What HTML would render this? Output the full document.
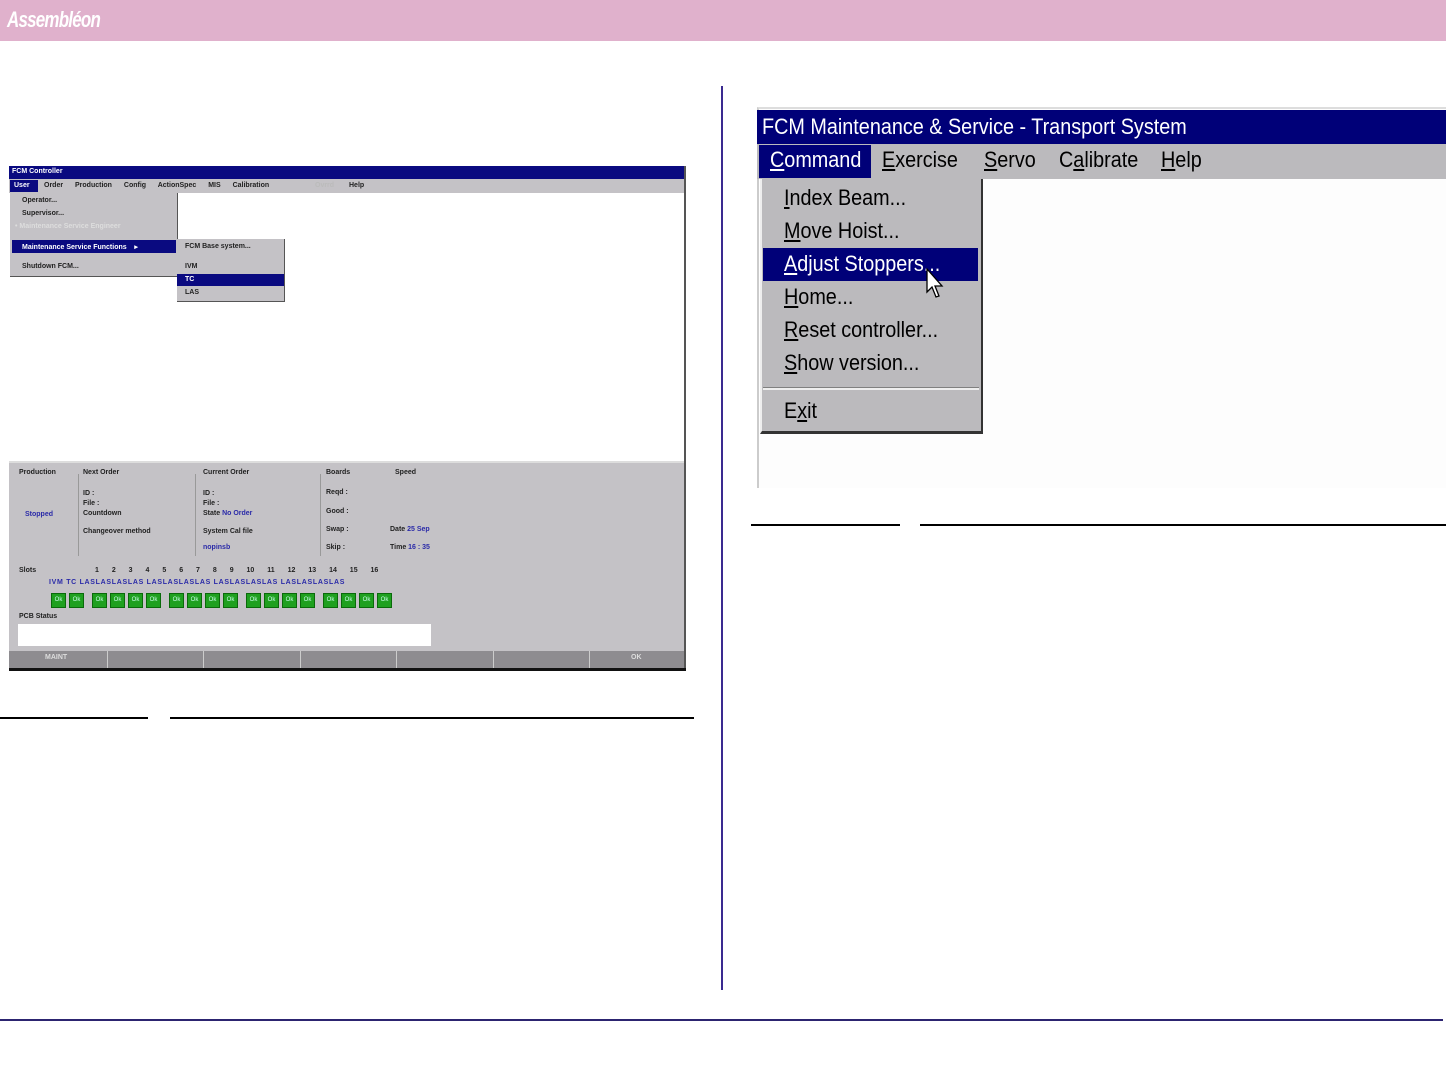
<!DOCTYPE html>
<html><head><meta charset="utf-8"><style>
*{margin:0;padding:0;box-sizing:border-box}
body{width:1446px;height:1077px;background:#fff;position:relative;overflow:hidden;font-family:"Liberation Sans",sans-serif}
.a{position:absolute}
.hdr{left:0;top:0;width:1446px;height:41px;background:#e0b1cc}
.logo{left:7px;top:7px;color:#fff;font:italic bold 22px "Liberation Sans",sans-serif;letter-spacing:-1px;transform:scaleX(.77);transform-origin:left}
.ln{background:#000;height:1.5px}
.s{font-size:7px;font-weight:bold;color:#222;white-space:nowrap}
.b{color:#2a2aa8}
.ok{width:15px;height:15px;background:#1fa01f;border:1px solid #0a6a0a;color:#cfe;font-size:6px;text-align:center;line-height:13px}
.big{font-family:"Liberation Sans",sans-serif;font-size:22px;white-space:nowrap;transform:scaleX(.9);transform-origin:left}
u{text-decoration:underline;text-underline-offset:2px}
</style></head><body>
<div class="a hdr"></div>
<div class="a logo">Assembléon</div>

<div class="a" style="left:9px;top:166px;width:677px;height:505px;background:#fff;border-right:2px solid #555"></div>
<div class="a" style="left:9px;top:166px;width:675px;height:13px;background:#0a0a80"></div>
<div class="a s" style="left:12px;top:168px;color:#fff;font-size:7px">FCM Controller</div>
<div class="a" style="left:9px;top:179px;width:675px;height:14px;background:#c4c2c6"></div>
<div class="a" style="left:10px;top:180px;width:28px;height:12px;background:#0a0a80"></div>
<div class="a s" style="left:14px;top:182px;color:#fff">User</div>
<div class="a s" style="left:44px;top:182px;word-spacing:10px">Order Production Config ActionSpec MIS Calibration</div>
<div class="a s" style="left:315px;top:182px;color:#bbb">Ovrrd</div>
<div class="a s" style="left:349px;top:182px">Help</div>
<div class="a" style="left:10px;top:193px;width:168px;height:84px;background:#c4c2c6;border-right:1px solid #555;border-bottom:1px solid #555"></div>
<div class="a s" style="left:22px;top:197px">Operator...</div>
<div class="a s" style="left:22px;top:210px">Supervisor...</div>
<div class="a s" style="left:15px;top:223px;color:#ddd">• Maintenance Service Engineer</div>
<div class="a" style="left:12px;top:240px;width:164px;height:13px;background:#0a0a80"></div>
<div class="a s" style="left:22px;top:243px;color:#fff">Maintenance Service Functions &nbsp;&nbsp;&nbsp;▸</div>
<div class="a s" style="left:22px;top:263px">Shutdown FCM...</div>
<div class="a" style="left:177px;top:239px;width:108px;height:63px;background:#c4c2c6;border-right:1px solid #555;border-bottom:1px solid #555"></div>
<div class="a s" style="left:185px;top:243px">FCM Base system...</div>
<div class="a s" style="left:185px;top:263px">IVM</div>
<div class="a" style="left:177px;top:274px;width:107px;height:12px;background:#0a0a80"></div>
<div class="a s" style="left:185px;top:276px;color:#fff">TC</div>
<div class="a s" style="left:185px;top:289px">LAS</div>
<div class="a" style="left:9px;top:461px;width:675px;height:191px;background:#c4c2c6;border-top:2px solid #ddd"></div>
<div class="a s" style="left:19px;top:469px">Production</div>
<div class="a s b" style="left:25px;top:511px">Stopped</div>
<div class="a s" style="left:83px;top:469px">Next Order</div>
<div class="a s" style="left:83px;top:489px;line-height:10px">ID :<br>File :<br>Countdown</div>
<div class="a s" style="left:83px;top:528px">Changeover method</div>
<div class="a s" style="left:203px;top:469px">Current Order</div>
<div class="a s" style="left:203px;top:489px;line-height:10px">ID :<br>File :<br>State <span class="b">No Order</span></div>
<div class="a s" style="left:203px;top:528px">System Cal file</div>
<div class="a s b" style="left:203px;top:544px">nopinsb</div>
<div class="a s" style="left:326px;top:469px">Boards</div>
<div class="a s" style="left:326px;top:489px">Reqd :</div>
<div class="a s" style="left:326px;top:508px">Good :</div>
<div class="a s" style="left:326px;top:526px">Swap :</div>
<div class="a s" style="left:326px;top:544px">Skip :</div>
<div class="a s" style="left:395px;top:469px">Speed</div>
<div class="a s" style="left:390px;top:526px">Date <span class="b">25 Sep</span></div>
<div class="a s" style="left:390px;top:544px">Time <span class="b">16 : 35</span></div>
<div class="a" style="left:78px;top:474px;width:1px;height:82px;background:#999"></div>
<div class="a" style="left:195px;top:474px;width:1px;height:82px;background:#999"></div>
<div class="a" style="left:320px;top:474px;width:1px;height:82px;background:#999"></div>
<div class="a s" style="left:19px;top:567px">Slots</div>
<div class="a s" style="left:95px;top:567px;word-spacing:11px">1 2 3 4 5 6 7 8 9 10 11 12 13 14 15 16</div>
<div class="a s b" style="left:49px;top:579px;font-size:7px;letter-spacing:.7px">IVM TC LASLASLASLAS LASLASLASLAS LASLASLASLAS LASLASLASLAS</div>
<div class="a" style="left:51px;top:593px;display:flex;gap:3px">
<div class="ok">Ok</div><div class="ok">Ok</div><div style="width:2px"></div>
<div class="ok">Ok</div><div class="ok">Ok</div><div class="ok">Ok</div><div class="ok">Ok</div><div style="width:2px"></div>
<div class="ok">Ok</div><div class="ok">Ok</div><div class="ok">Ok</div><div class="ok">Ok</div><div style="width:2px"></div>
<div class="ok">Ok</div><div class="ok">Ok</div><div class="ok">Ok</div><div class="ok">Ok</div><div style="width:2px"></div>
<div class="ok">Ok</div><div class="ok">Ok</div><div class="ok">Ok</div><div class="ok">Ok</div></div>
<div class="a s" style="left:19px;top:613px">PCB Status</div>
<div class="a" style="left:18px;top:624px;width:413px;height:22px;background:#fff"></div>
<div class="a" style="left:9px;top:651px;width:675px;height:17px;background:#8e8c90"></div>
<div class="a" style="left:9px;top:668px;width:677px;height:3px;background:#111"></div>
<div class="a s" style="left:45px;top:654px;color:#ddd">MAINT</div>
<div class="a s" style="left:631px;top:654px;color:#ddd">OK</div>
<div class="a" style="left:107px;top:651px;width:1px;height:17px;background:#ccc"></div>
<div class="a" style="left:203px;top:651px;width:1px;height:17px;background:#ccc"></div>
<div class="a" style="left:300px;top:651px;width:1px;height:17px;background:#ccc"></div>
<div class="a" style="left:396px;top:651px;width:1px;height:17px;background:#ccc"></div>
<div class="a" style="left:493px;top:651px;width:1px;height:17px;background:#ccc"></div>
<div class="a" style="left:589px;top:651px;width:1px;height:17px;background:#ccc"></div>

<div class="a ln" style="left:0;top:717px;width:148px"></div>
<div class="a ln" style="left:170px;top:717px;width:524px"></div>

<div class="a" style="left:721px;top:86px;width:1.5px;height:904px;background:#3a2a90"></div>

<div class="a" style="left:757px;top:107px;width:689px;height:381px;background:#fdfdfd;border-left:2px solid #ccc;border-top:2px solid #ddd"></div>
<div class="a" style="left:757px;top:110px;width:689px;height:34px;background:#000078"></div>
<div class="a big" style="left:762px;top:114px;color:#fff">FCM Maintenance &amp; Service - Transport System</div>
<div class="a" style="left:757px;top:144px;width:689px;height:35px;background:#bbbabd"></div>
<div class="a" style="left:759px;top:145px;width:112px;height:33px;background:#000078"></div>
<div class="a big" style="left:770px;top:147px;color:#fff"><u>C</u>ommand</div>
<div class="a big" style="left:882px;top:147px;color:#000"><u>E</u>xercise</div>
<div class="a big" style="left:984px;top:147px;color:#000"><u>S</u>ervo</div>
<div class="a big" style="left:1059px;top:147px;color:#000">C<u>a</u>librate</div>
<div class="a big" style="left:1161px;top:147px;color:#000"><u>H</u>elp</div>
<div class="a" style="left:760px;top:179px;width:223px;height:255px;background:#bbbabd;border-left:2px solid #eee;border-right:2px solid #333;border-bottom:3px solid #333"></div>
<div class="a" style="left:763px;top:248px;width:215px;height:33px;background:#000078"></div>
<div class="a big" style="left:784px;top:185px"><u>I</u>ndex Beam...</div>
<div class="a big" style="left:784px;top:218px"><u>M</u>ove Hoist...</div>
<div class="a big" style="left:784px;top:251px;color:#fff"><u>A</u>djust Stoppers...</div>
<div class="a big" style="left:784px;top:284px"><u>H</u>ome...</div>
<div class="a big" style="left:784px;top:317px"><u>R</u>eset controller...</div>
<div class="a big" style="left:784px;top:350px"><u>S</u>how version...</div>
<div class="a" style="left:763px;top:387px;width:216px;height:1px;background:#808080"></div>
<div class="a" style="left:763px;top:388px;width:216px;height:2px;background:#eee"></div>
<div class="a big" style="left:784px;top:398px">E<u>x</u>it</div>
<svg class="a" style="left:926px;top:268px" width="20" height="34" viewBox="0 0 20 34"><path d="M1 1 L1 24 L6 19 L10 29 L13 28 L9 18 L16 18 Z" fill="#fff" stroke="#000" stroke-width="1.3"/></svg>

<div class="a ln" style="left:751px;top:524px;width:149px"></div>
<div class="a ln" style="left:920px;top:524px;width:526px"></div>

<div class="a" style="left:0;top:1019px;width:1443px;height:2px;background:#2c2470"></div>
</body></html>
